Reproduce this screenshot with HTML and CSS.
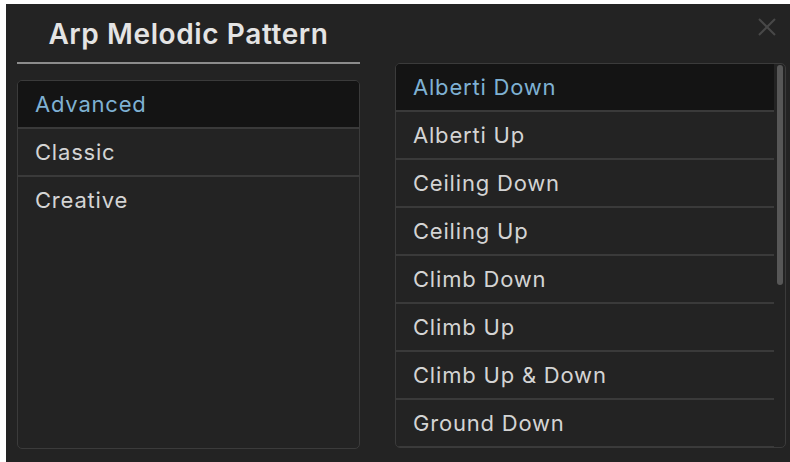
FILE: index.html
```html
<!DOCTYPE html>
<html lang="en">
<head>
    <meta charset="UTF-8" />
    <meta name="viewport" content="width=device-width, initial-scale=1.0" />
    <title>Arp Melodic Pattern</title>
    <link rel="stylesheet" href="styles.css">
</head>
<body>
    <div class="panel">
        <button class="close-btn" aria-label="Close">
            <svg width="20" height="20" viewBox="0 0 20 20">
                <path d="M2 2 L18 18 M18 2 L2 18" stroke="#484848" stroke-width="2" fill="none" />
            </svg>
        </button>

        <div class="col-left">
            <h1 class="titulo">Arp Melodic Pattern</h1>
            <ul class="lista lista-cat">
                <li class="item activo">Advanced</li>
                <li class="item">Classic</li>
                <li class="item">Creative</li>
            </ul>
        </div>

        <div class="col-right">
            <div class="lista lista-pat">
                <ul class="items">
                    <li class="item activo">Alberti Down</li>
                    <li class="item">Alberti Up</li>
                    <li class="item">Ceiling Down</li>
                    <li class="item">Ceiling Up</li>
                    <li class="item">Climb Down</li>
                    <li class="item">Climb Up</li>
                    <li class="item">Climb Up &amp; Down</li>
                    <li class="item">Ground Down</li>
                </ul>
                <div class="scroll-track">
                    <div class="scroll-thumb"></div>
                </div>
            </div>
        </div>
    </div>
</body>
</html>
```

FILE: styles.css
```css
body {
    margin: 0;
    background: #ffffff;
    font-family: 'Inter', 'Liberation Sans', sans-serif;
}
.panel {
    position: relative;
    box-sizing: border-box;
    margin: 4px 0 0 6px;
    width: 784px;
    height: 458px;
    background: #232323;
    display: flex;
    gap: 35px;
    padding: 0 4px 0 11px;
}
.close-btn {
    position: absolute;
    top: 13px;
    right: 13px;
    padding: 0;
    border: none;
    background: none;
    cursor: pointer;
}
.col-left {
    width: 343px;
    display: flex;
    flex-direction: column;
}
.titulo {
    margin: 0;
    height: 57px;
    display: flex;
    align-items: center;
    justify-content: center;
    padding-top: 1px;
    font-size: 28px;
    font-weight: 600;
    letter-spacing: 0.6px;
    color: #e4e4e4;
    border-bottom: 2px solid #8c8c8c;
}
.col-right {
    width: 391px;
    padding-top: 59px;
}
.lista {
    margin: 0;
    padding: 0;
    list-style: none;
    border: 1px solid #3b3b3b;
    border-radius: 5px;
    overflow: hidden;
}
.lista-cat {
    margin-top: 16px;
    height: 369px;
    box-sizing: border-box;
}
.lista-cat .item:last-child {
    border-bottom: none;
}
.lista-pat {
    height: 385px;
    box-sizing: border-box;
    display: flex;
}
.items {
    flex: 1;
    margin: 0;
    padding: 0;
    list-style: none;
    overflow: hidden;
}
.item {
    height: 46px;
    display: flex;
    align-items: center;
    padding-left: 17px;
    font-size: 22px;
    font-weight: 400;
    letter-spacing: 0.8px;
    color: #d4d4d4;
    border-bottom: 2px solid #3a3a3a;
}
.item.activo {
    background: #141414;
    color: #7fb1d3;
}
.scroll-track {
    width: 11px;
    padding-left: 3px;
    box-sizing: border-box;
}
.scroll-thumb {
    width: 6px;
    height: 220px;
    margin-top: 1px;
    background: #575757;
    border-radius: 3px;
}
```
